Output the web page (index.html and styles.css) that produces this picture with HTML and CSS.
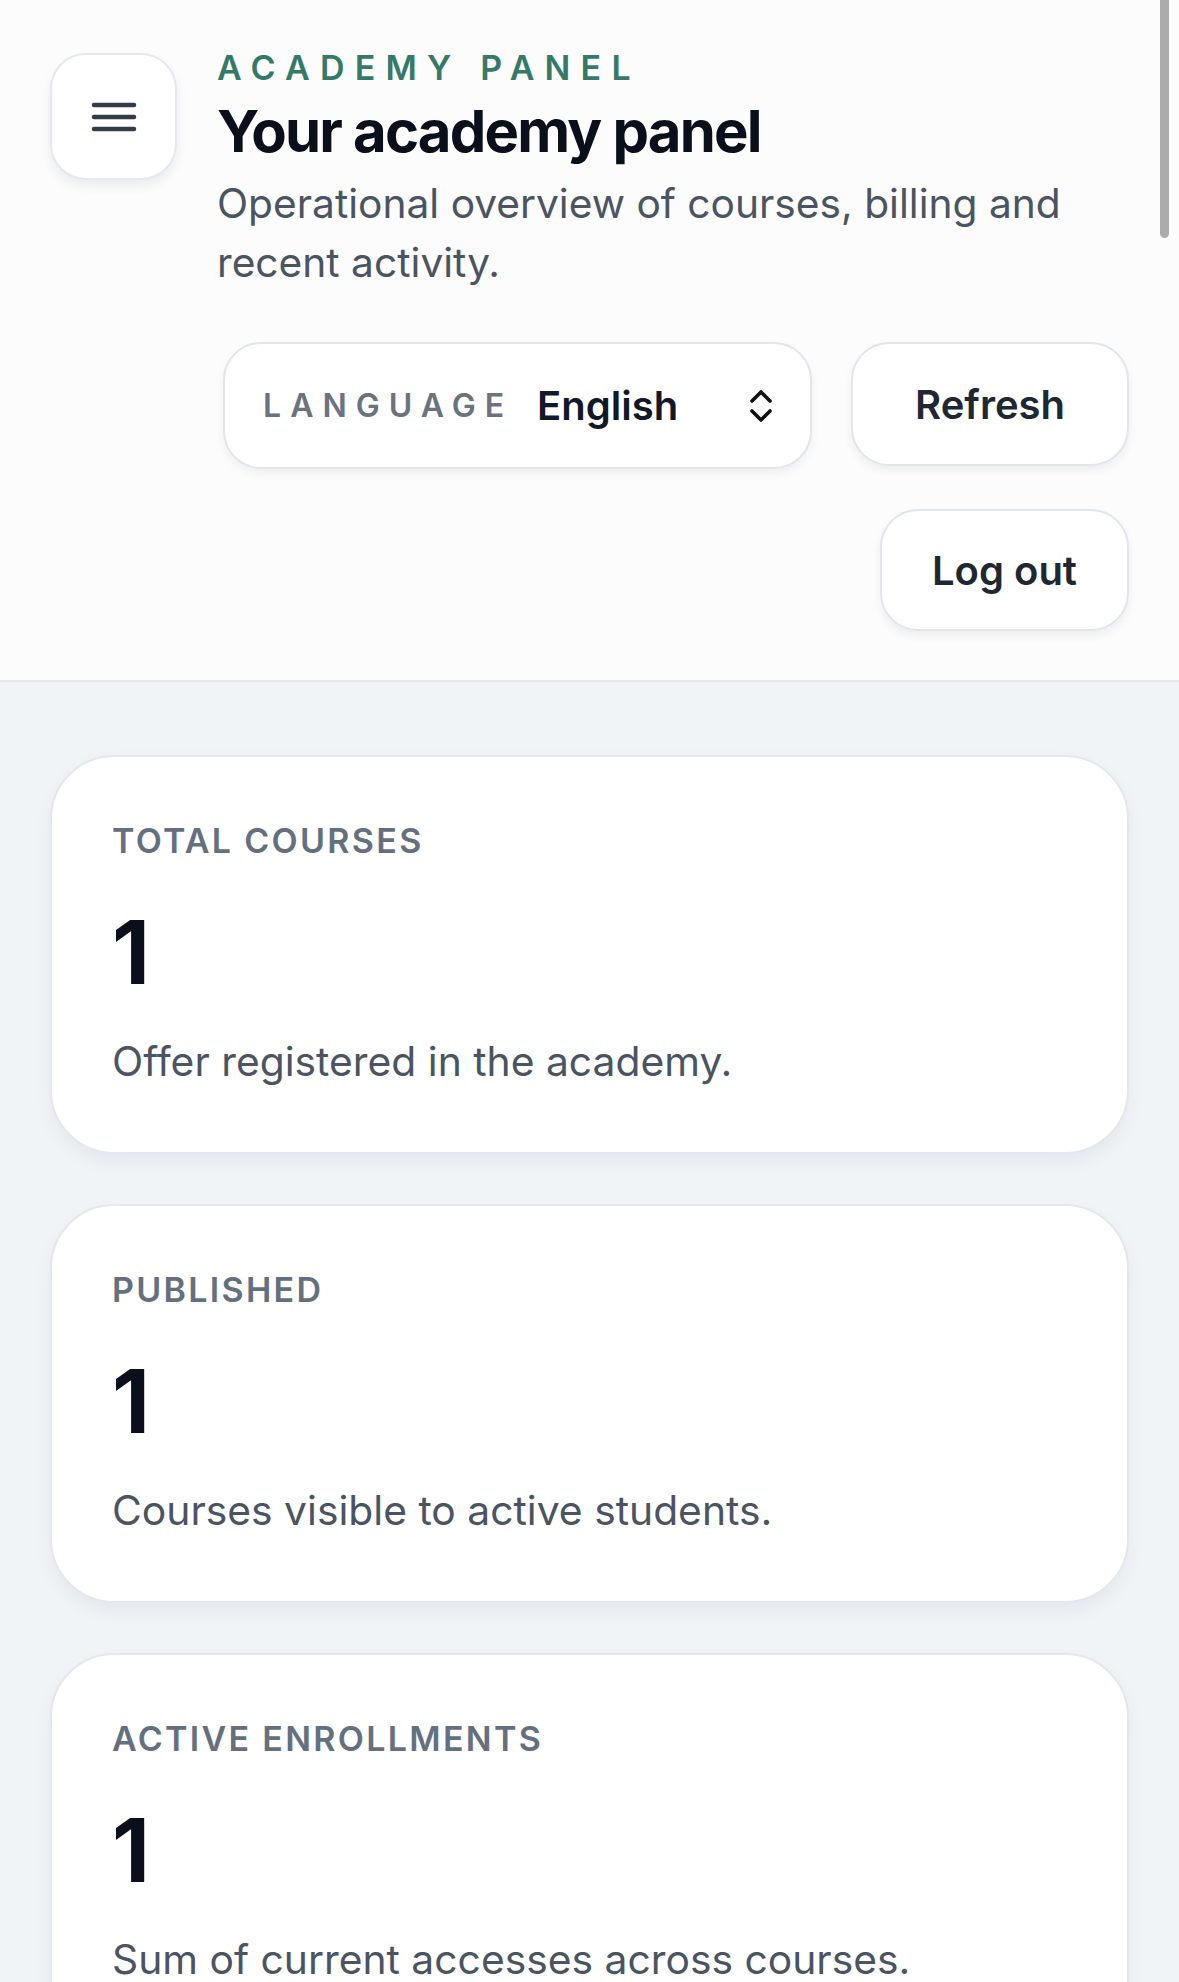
FILE: index.html
```html
<!DOCTYPE html>
<html lang="en">

<head>
    <meta charset="UTF-8">
    <meta name="viewport" content="width=device-width, initial-scale=1.0">
    <link rel="stylesheet" href="styles.css">
    <title>Academy panel</title>
</head>

<body>
    <header class="topbar">
        <button class="menu-btn" aria-label="Menu">
            <svg width="46" height="30" viewBox="0 0 46 30">
                <path d="M3 3h40M3 15h40M3 27h40" stroke="#343c4a" stroke-width="4.5" stroke-linecap="round" fill="none" />
            </svg>
        </button>
        <div class="intro">
            <p class="eyebrow">Academy panel</p>
            <h1 class="title">Your academy panel</h1>
            <p class="subtitle">Operational overview of courses, billing and recent activity.</p>
            <div class="actions">
                <label class="lang">
                    <span class="lang-label">Language</span>
                    <span class="lang-value">English</span>
                    <svg class="lang-arrows" width="26" height="34" viewBox="0 0 26 34">
                        <path d="M4 12l9-9 9 9M4 22l9 9 9-9" stroke="#111" stroke-width="3.6" stroke-linecap="round" stroke-linejoin="round" fill="none" />
                    </svg>
                </label>
                <button class="btn">Refresh</button>
                <button class="btn btn-small">Log out</button>
            </div>
        </div>
    </header>

    <main class="stats">
        <section class="card">
            <p class="card-label">Total courses</p>
            <p class="card-num">1</p>
            <p class="card-desc">Offer registered in the academy.</p>
        </section>
        <section class="card">
            <p class="card-label">Published</p>
            <p class="card-num">1</p>
            <p class="card-desc">Courses visible to active students.</p>
        </section>
        <section class="card">
            <p class="card-label">Active enrollments</p>
            <p class="card-num">1</p>
            <p class="card-desc">Sum of current accesses across courses.</p>
        </section>
    </main>

    <div class="scroll-thumb"></div>
</body>

</html>
```

FILE: styles.css
```css
* {
    margin: 0;
    padding: 0;
    box-sizing: border-box;
}

body {
    font-family: Inter, "Noto Sans", sans-serif;
    background-color: #f0f4f7;
    color: #0b1220;
    min-height: 1982px;
}

button {
    font-family: inherit;
    cursor: pointer;
}

.topbar {
    background-color: #fcfcfc;
    border-bottom: 2px solid #e4e8ed;
    padding: 47px 50px 49px 50px;
    display: flex;
    align-items: flex-start;
    gap: 40px;
}

.menu-btn {
    flex: none;
    width: 127px;
    height: 127px;
    margin-top: 6px;
    border: 2px solid #e5e8ed;
    border-radius: 36px;
    background-color: #fff;
    box-shadow: 0 6px 12px rgba(15, 23, 42, 0.07);
    display: flex;
    align-items: center;
    justify-content: center;
}

.intro {
    flex: 1;
}

.eyebrow {
    font-size: 34px;
    line-height: 41px;
    font-weight: 600;
    letter-spacing: 10.2px;
    text-transform: uppercase;
    color: #357a68;
}

.title {
    margin-top: 10px;
    font-size: 58px;
    line-height: 67px;
    font-weight: 700;
    letter-spacing: -1.8px;
    color: #0a0f1c;
}

.subtitle {
    margin-top: 9px;
    font-size: 40.7px;
    line-height: 59px;
    color: #4a5462;
}

.actions {
    margin-top: 50px;
    display: flex;
    flex-wrap: wrap;
    justify-content: flex-end;
    gap: 40px 39px;
}

.lang {
    width: 589px;
    height: 127px;
    padding: 0 36px 0 38px;
    border: 2px solid #e2e6eb;
    border-radius: 38px;
    background-color: #fff;
    box-shadow: 0 5px 10px rgba(15, 23, 42, 0.05);
    display: flex;
    align-items: center;
}

.lang-label {
    font-size: 32px;
    font-weight: 600;
    letter-spacing: 9px;
    text-transform: uppercase;
    color: #6b7380;
}

.lang-value {
    margin-left: 24px;
    font-size: 40px;
    font-weight: 600;
    color: #111827;
}

.lang-arrows {
    margin-left: auto;
}

.btn {
    height: 124px;
    padding: 0 62px;
    border: 2px solid #e2e6eb;
    border-radius: 38px;
    background-color: #fff;
    box-shadow: 0 5px 10px rgba(15, 23, 42, 0.06);
    font-size: 40px;
    font-weight: 600;
    color: #1f2733;
}

.btn-small {
    height: 122px;
    padding: 0 50px;
}

.stats {
    padding: 73px 50px 40px 50px;
    display: flex;
    flex-direction: column;
    gap: 50px;
}

.card {
    padding: 59px 60px 61px;
    border: 2px solid #e3e8ee;
    border-radius: 64px;
    background-color: #fff;
    box-shadow: 0 8px 18px rgba(15, 23, 42, 0.05);
}

.card-label {
    font-size: 34px;
    line-height: 50px;
    font-weight: 600;
    letter-spacing: 2.3px;
    text-transform: uppercase;
    color: #64707f;
}

.card-num {
    margin-top: 42px;
    font-size: 88px;
    line-height: 88px;
    font-weight: 700;
    color: #0a0f1c;
}

.card-desc {
    margin-top: 35px;
    font-size: 40.8px;
    line-height: 60px;
    color: #4a5462;
}

.scroll-thumb {
    position: fixed;
    top: 0;
    right: 10px;
    width: 9px;
    height: 238px;
    border-radius: 0 0 5px 5px;
    background-color: #acacac;
}
```
